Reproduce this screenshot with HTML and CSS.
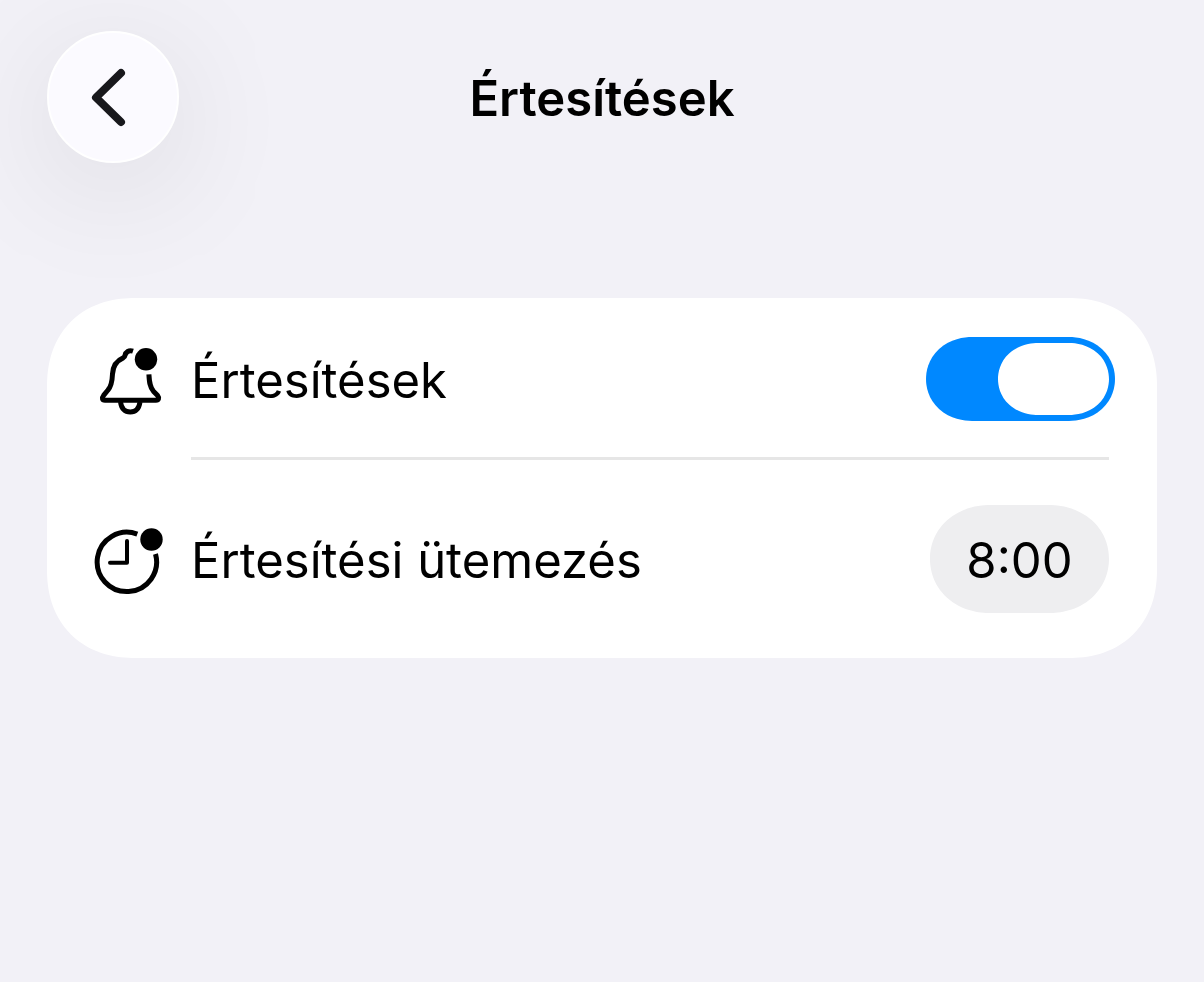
FILE: index.html
```
<!DOCTYPE html>
<html lang="hu">

<head>
	<meta charset="utf-8">
	<meta name="viewport" content="width=device-width, initial-scale=1">
	<title>Értesítések</title>
	<link rel="stylesheet" href="styles.css">
</head>

<body>
	<header class="header">
		<button type="button" class="back" aria-label="Vissza">
			<svg class="back-icon" viewBox="0 0 60 60" aria-hidden="true">
				<path d="M38 6 13 30.500 38 55" />
			</svg>
		</button>
		<h1 class="title">Értesítések</h1>
	</header>

	<main class="card">
		<!-- notifications on / off -->
		<div class="row">
			<svg class="icon" viewBox="0 0 72 72" aria-hidden="true">
				<path d="M39 8.200C34.800 6.800 31.800 9 31 12.400C30.800 13.800 30.300 14.300 29.200 14.900C22 18 19 23 18.500 31C18.200 38.500 17.600 43 14 47L9.600 52.400C7.600 55 8.200 57.200 11 57.200H62C64.600 57.200 65.500 55 63.600 52.600L59.400 48.200C55.800 44 55.300 39 54.900 31.300" />
				<path d="M26.500 59C27.500 66 31 69 36.300 69C41.600 69 45 66 46 59" />
				<circle class="dot" cx="52" cy="16.300" r="11.200" />
			</svg>
			<div class="row-body row-line">
				<label class="label" for="notifications">Értesítések</label>
				<input type="checkbox" role="switch" class="switch" id="notifications" checked>
			</div>
		</div>

		<!-- time of the daily notification -->
		<div class="row">
			<svg class="icon" viewBox="0 0 72 72" aria-hidden="true">
				<path d="M43.300 11.100A29.700 29.700 0 1 0 61.500 31" />
				<path class="hands" d="M33 18V39.700H16" />
				<circle class="dot" cx="57.500" cy="16.500" r="11.200" />
			</svg>
			<div class="row-body">
				<span class="label" id="schedule">Értesítési ütemezés</span>
				<button type="button" class="time" aria-describedby="schedule">8:00</button>
			</div>
		</div>
	</main>
</body>

</html>
```
FILE: styles.css
```
* {
	box-sizing: border-box;
}

body {
	margin: 0;
	padding: 31px 47px;
	background-color: #f2f1f7;
	font-family: Inter, "Liberation Sans", sans-serif;
	font-size: 49px;
	line-height: 60px;
	color: #000;
}

.header {
	display: grid;
	grid-template-columns: 132px 1fr 132px;
	align-items: center;
}

.title {
	margin: 0;
	padding-top: 4px;
	font-size: 49px;
	font-weight: 600;
	text-align: center;
}

/* round glass button */
.back {
	display: flex;
	align-items: center;
	justify-content: center;
	width: 132px;
	height: 132px;
	padding: 0;
	border: 2px solid #fff;
	border-radius: 50%;
	background-color: #fbfaff;
	box-shadow: 0 24px 130px rgba(0, 0, 0, 0.1);
	cursor: pointer;
}

.back-icon {
	width: 60px;
	height: 60px;
	fill: none;
	stroke: #18181c;
	stroke-width: 8;
	stroke-linecap: round;
	stroke-linejoin: round;
}

.card {
	margin-top: 135px;
	padding: 0 48px 0 47px;
	border-radius: 88px;
	corner-shape: superellipse(1.14);
	background-color: #fff;
}

.row {
	display: flex;
	align-items: center;
	gap: 25px;
}

.icon {
	flex: none;
	width: 72px;
	height: 72px;
	fill: none;
	stroke: #000;
	stroke-width: 5;
	stroke-linejoin: round;
}

.icon .hands {
	stroke-width: 4;
	stroke-linecap: round;
}

.icon .dot {
	fill: #000;
	stroke: none;
}

.row-body {
	flex: 1;
	display: flex;
	align-items: center;
	justify-content: space-between;
	padding: 45px 0;
}

.row-line {
	padding: 39px 0 36px;
	border-bottom: 3px solid #e6e6e6;
}

.label {
	padding-top: 4px;
}

/* the switch hangs a little past the end of the line */
.switch {
	appearance: none;
	display: flex;
	flex: none;
	width: 189px;
	height: 84px;
	margin: 0 -6px 0 0;
	padding: 6px;
	border-radius: 46px / 42px;
	corner-shape: superellipse(1.05);
	background-color: #d9d9de;
	cursor: pointer;
}

.switch::before {
	content: "";
	width: 111px;
	height: 72px;
	border-radius: 40px / 36px;
	corner-shape: superellipse(1.05);
	background-color: #fff;
}

.switch:checked {
	justify-content: flex-end;
	background-color: #0088ff;
}

.time {
	flex: none;
	width: 179px;
	height: 108px;
	padding: 4px 0 0;
	border: 0;
	border-radius: 60px / 54px;
	corner-shape: superellipse(1.05);
	background-color: #eeeef0;
	font: inherit;
	color: inherit;
	cursor: pointer;
}
```
